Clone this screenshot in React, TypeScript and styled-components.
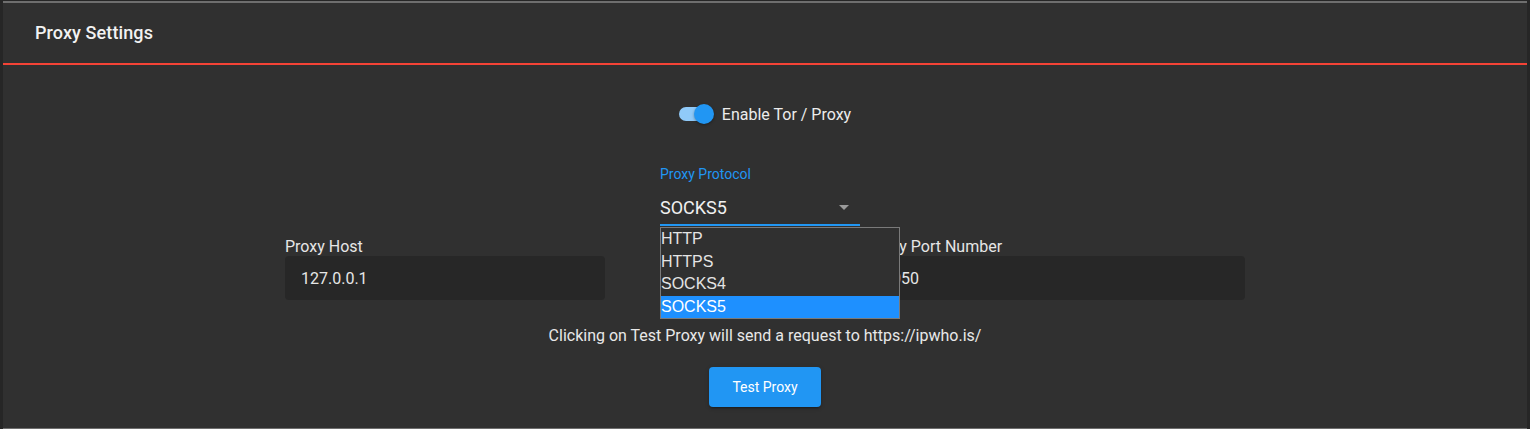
import React from "react";
import styled, { createGlobalStyle } from "styled-components";

const Global = createGlobalStyle`
  html, body { margin: 0; padding: 0; background: #262626; }
  body { font-family: Roboto, "Liberation Sans", Arial, sans-serif; color: #e6e6e6; }
  * { box-sizing: border-box; }
`;

const Page = styled.div`
  padding: 1px 3px 0 3px;
  height: 429px;
  overflow: hidden;
`;

const Card = styled.section`
  background: #303030;
  border-top: 2px solid #6e6e6e;
  border-bottom: 2px solid #6e6e6e;
  height: 429px;
`;

const Header = styled.header`
  height: 62px;
  display: flex;
  align-items: center;
  padding-left: 32px;
  padding-bottom: 2px;
  border-bottom: 2px solid #f44336;
`;

const Title = styled.h2`
  margin: 0;
  font-size: 18px;
  font-weight: 500;
  color: #f2f2f2;
  letter-spacing: 0.1px;
`;

const Body = styled.div`
  display: flex;
  flex-direction: column;
  align-items: center;
  padding-top: 30px;
`;

const ToggleRow = styled.label`
  height: 38px;
  display: flex;
  align-items: center;
  gap: 8px;
  font-size: 16px;
  color: #ececec;
`;

const Switch = styled.span<{ $on: boolean }>`
  position: relative;
  width: 35px;
  height: 20px;
  display: inline-block;
  &::before {
    content: "";
    position: absolute;
    left: 0;
    top: 3px;
    width: 34px;
    height: 14px;
    border-radius: 7px;
    background: ${(p) => (p.$on ? "#90caf9" : "#777")};
  }
  &::after {
    content: "";
    position: absolute;
    top: 0;
    left: ${(p) => (p.$on ? "15px" : "0")};
    width: 20px;
    height: 20px;
    border-radius: 50%;
    background: ${(p) => (p.$on ? "#2196f3" : "#ddd")};
    box-shadow: 0 1px 3px rgba(0, 0, 0, 0.35);
  }
`;

const SelectField = styled.div`
  position: relative;
  width: 200px;
  margin-top: 33px;
  margin-right: 10px;
`;

const FieldLabel = styled.div<{ $accent?: boolean }>`
  font-size: ${(p) => (p.$accent ? "14px" : "16px")};
  line-height: ${(p) => (p.$accent ? "17px" : "19px")};
  color: ${(p) => (p.$accent ? "#2196f3" : "#e6e6e6")};
`;

const SelectBox = styled.div`
  display: flex;
  align-items: center;
  justify-content: space-between;
  padding: 14px 11px 6px 0;
  font-size: 18px;
  line-height: 21px;
  color: #f0f0f0;
  border-bottom: 2px solid #2196f3;
`;

const Caret = styled.span`
  width: 0;
  height: 0;
  border-left: 5px solid transparent;
  border-right: 5px solid transparent;
  border-top: 5px solid #9a9a9a;
`;

const Menu = styled.ul`
  position: absolute;
  left: 0;
  top: calc(100% + 1px);
  width: 240px;
  margin: 0;
  padding: 0;
  list-style: none;
  background: #303030;
  border: 1px solid #7a7a7a;
  z-index: 2;
`;

const MenuItem = styled.li<{ $selected?: boolean }>`
  height: 22.5px;
  line-height: 22.5px;
  padding-left: 0;
  font-family: "Liberation Sans", Arial, sans-serif;
  font-size: 16px;
  color: ${(p) => (p.$selected ? "#ffffff" : "#e4e4e4")};
  background: ${(p) => (p.$selected ? "#1e90ff" : "transparent")};
`;

const FieldsRow = styled.div`
  width: 960px;
  display: flex;
  justify-content: space-between;
  margin-top: 11px;
`;

const Field = styled.div<{ $width: number }>`
  width: ${(p) => p.$width}px;
`;

const InputBox = styled.div`
  height: 44px;
  display: flex;
  align-items: center;
  padding: 0 16px;
  background: #272727;
  border-radius: 4px;
  font-size: 16px;
  color: #e6e6e6;
`;

const Info = styled.p`
  margin: 26px 0 0;
  font-size: 16px;
  line-height: 19px;
  color: #e8e8e8;
`;

const Button = styled.button`
  margin-top: 22px;
  width: 112px;
  height: 40px;
  border: none;
  border-radius: 4px;
  background: #2196f3;
  color: #ffffff;
  font-family: Roboto, sans-serif;
  font-size: 14px;
  font-weight: 400;
  box-shadow: 0 3px 1px -2px rgba(0,0,0,0.2), 0 2px 2px 0 rgba(0,0,0,0.14), 0 1px 5px 0 rgba(0,0,0,0.12);
  cursor: pointer;
`;

const options = ["HTTP", "HTTPS", "SOCKS4", "SOCKS5"];

export default function App() {
  const selected = "SOCKS5";
  return (
    <>
      <Global />
      <Page>
        <Card>
          <Header>
            <Title>Proxy Settings</Title>
          </Header>
          <Body>
            <ToggleRow>
              <Switch $on={true} />
              Enable Tor / Proxy
            </ToggleRow>
            <SelectField>
              <FieldLabel $accent>Proxy Protocol</FieldLabel>
              <SelectBox>
                {selected}
                <Caret />
              </SelectBox>
              <Menu>
                {options.map((o) => (
                  <MenuItem key={o} $selected={o === selected}>
                    {o}
                  </MenuItem>
                ))}
              </Menu>
            </SelectField>
            <FieldsRow>
              <Field $width={320}>
                <FieldLabel>Proxy Host</FieldLabel>
                <InputBox>127.0.0.1</InputBox>
              </Field>
              <Field $width={378}>
                <FieldLabel>Proxy Port Number</FieldLabel>
                <InputBox>9050</InputBox>
              </Field>
            </FieldsRow>
            <Info>Clicking on Test Proxy will send a request to https://ipwho.is/</Info>
            <Button>Test Proxy</Button>
          </Body>
        </Card>
      </Page>
    </>
  );
}
